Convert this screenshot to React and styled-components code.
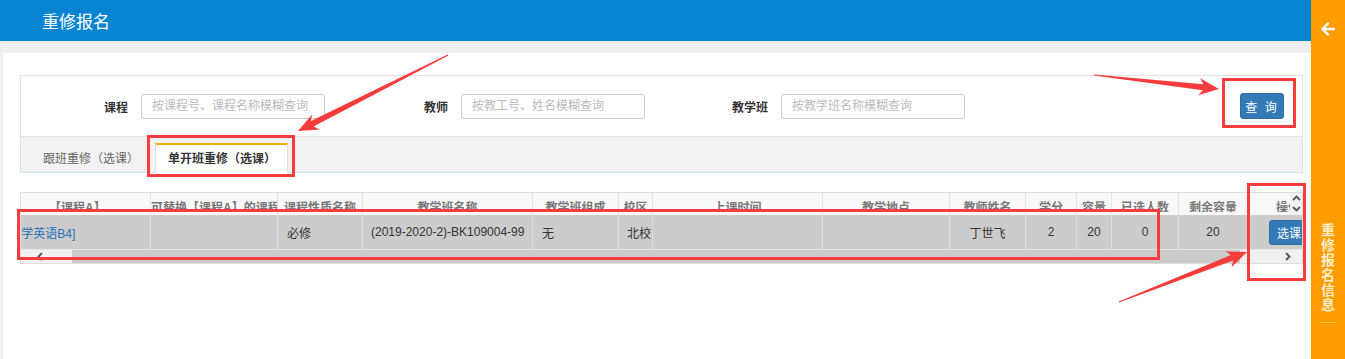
import React from "react";
import styled, { createGlobalStyle } from "styled-components";
import { FaArrowLeft } from "react-icons/fa";

const GlobalStyle = createGlobalStyle`
  html, body {
    margin: 0;
    padding: 0;
  }
  body {
    font-family: "Liberation Sans", "Noto Sans CJK SC", sans-serif;
    font-size: 12px;
    color: #333;
    overflow: hidden;
  }
`;

const Page = styled.div`
  position: relative;
  display: flex;
  width: 1345px;
  height: 359px;
  overflow: hidden;
`;

const Main = styled.div`
  width: 1311px;
  flex-shrink: 0;
  display: flex;
  flex-direction: column;
  background: #efefef;
`;

const TopBar = styled.div`
  height: 41px;
  flex-shrink: 0;
  display: flex;
  align-items: center;
  padding-left: 42px;
  background: #0784d1;
  color: #fff;
  font-size: 17px;
`;

const Content = styled.div`
  flex: 1;
  margin: 12px 0 0 3px;
  padding: 22px 8px 0 17px;
  background: #fff;
`;

const SearchPanel = styled.div`
  height: 60px;
  border: 1px solid #e3e3e3;
  display: flex;
  align-items: center;
  padding-left: 47px;
  gap: 63px;
`;

const Field = styled.div`
  display: flex;
  align-items: center;
  gap: 13px;
`;

const Label = styled.span`
  width: 60px;
  text-align: right;
  font-weight: bold;
  color: #333;
`;

const Input = styled.input`
  width: 184px;
  height: 25px;
  box-sizing: border-box;
  padding: 0 10px;
  border: 1px solid #cccccc;
  border-radius: 3px;
  font-family: inherit;
  font-size: 12px;
  outline: none;

  &::placeholder {
    color: #bbbbbb;
  }
`;

const QueryButton = styled.button`
  margin-left: auto;
  margin-right: 18px;
  width: 44px;
  height: 26px;
  padding: 0;
  border: 1px solid #2e6da4;
  border-radius: 3px;
  background: #337ab7;
  color: #fff;
  font-family: inherit;
  font-size: 12px;
  letter-spacing: 2px;
`;

const TabBar = styled.div`
  height: 35px;
  display: flex;
  align-items: flex-end;
  background: #f2f2f2;
  border: 1px solid #c9e7f1;
  border-top: none;
`;

const Tab = styled.div`
  height: 28px;
  line-height: 28px;
  margin-bottom: -1px;
  border-top: 2px solid ${(p) => (p.$active ? "#f0ad0e" : "transparent")};
  border-left: 1px solid ${(p) => (p.$active ? "#e0e0e0" : "transparent")};
  border-right: 1px solid ${(p) => (p.$active ? "#e0e0e0" : "transparent")};
  background: ${(p) => (p.$active ? "#fff" : "transparent")};
  padding: ${(p) => (p.$active ? "0 11px 0 12px" : "0 15px 0 21px")};
  color: ${(p) => (p.$active ? "#333" : "#666")};
  font-weight: ${(p) => (p.$active ? "bold" : "normal")};
  white-space: nowrap;
`;

const Table = styled.div`
  margin-top: 19px;
  border: 1px solid #dddddd;
  overflow: hidden;
`;

const HeadRow = styled.div`
  display: flex;
  height: 22px;
  background: #f8f8f8;
`;

const HeadCells = styled.div`
  flex: 1;
  display: flex;
  overflow: hidden;
`;

const HeadCell = styled.div`
  flex: 0 0 ${(p) => p.$w}px;
  box-sizing: border-box;
  height: 22px;
  padding-left: ${(p) => p.$pad || 0}px;
  text-align: ${(p) => p.$align};
  border-right: 1px solid #e2e2e2;
  color: #777;
  font-weight: bold;
  white-space: nowrap;
  overflow: hidden;
`;

const HeadLabel = styled.div`
  box-sizing: border-box;
  height: 19px;
  padding-top: 6px;
  line-height: 18px;
  overflow: hidden;
`;

const VScroll = styled.div`
  width: 12px;
  flex-shrink: 0;
  background: #f1f1f1;
  display: flex;
  flex-direction: column;
  align-items: center;
  padding-top: 2px;
  gap: 5px;
`;

const DataRow = styled.div`
  display: flex;
  height: 34px;
  background: #cccccc;
  border-bottom: 1px solid #e6e6e6;
  overflow: hidden;
`;

const DataCell = styled.div`
  flex: 0 0 ${(p) => p.$w}px;
  box-sizing: border-box;
  display: flex;
  align-items: center;
  justify-content: ${(p) => (p.$align === "center" ? "center" : "flex-start")};
  padding-left: ${(p) => p.$pad || 0}px;
  border-right: 1px solid #dfdfdf;
  color: #333;
  white-space: nowrap;
  overflow: hidden;
`;

const CourseLink = styled.a`
  margin-left: -15px;
  color: #2a6fb8;
  text-decoration: none;
  flex-shrink: 0;
`;

const SelectButton = styled.button`
  margin-left: 21px;
  flex-shrink: 0;
  height: 25px;
  padding: 0 9px 0 7px;
  border: 1px solid #2e6da4;
  border-radius: 3px;
  background: #337ab7;
  color: #fff;
  font-family: inherit;
  font-size: 12px;
`;

const HScroll = styled.div`
  display: flex;
  height: 13px;
  background: #f0f0f0;
`;

const ArrowBtn = styled.div`
  width: ${(p) => p.$w}px;
  margin-right: ${(p) => p.$mr || 0}px;
  flex-shrink: 0;
  display: flex;
  align-items: center;
  justify-content: center;
`;

const Thumb = styled.div`
  width: 1168px;
  margin-left: 13px;
  flex-shrink: 0;
  background: #cbcbcb;
`;

const Spacer = styled.div`
  flex: 1;
`;

const SideBar = styled.div`
  flex: 1;
  background: #ff9c00;
  display: flex;
  flex-direction: column;
  align-items: center;
  padding-top: 21px;
  color: #fff;
`;

const VerticalText = styled.div`
  margin-top: 186px;
  display: flex;
  flex-direction: column;
  align-items: center;
  font-size: 14px;
  line-height: 15px;
  font-weight: bold;
  color: #ffedc9;
`;

const SideLine = styled.div`
  width: 17px;
  height: 1px;
  margin-top: 9px;
  background: #ffc257;
`;

const Overlay = styled.svg`
  position: absolute;
  left: 0;
  top: 0;
  pointer-events: none;
`;

const columns = [
  { w: 130, head: "【课程A】", headAlign: "left", headPad: 28 },
  { w: 127, head: "可替换【课程A】的课程" },
  { w: 85, head: "课程性质名称" },
  { w: 170, head: "教学班名称" },
  { w: 86, head: "教学班组成" },
  { w: 34, head: "校区" },
  { w: 170, head: "上课时间" },
  { w: 127, head: "教学地点" },
  { w: 76, head: "教师姓名" },
  { w: 51, head: "学分" },
  { w: 35, head: "容量" },
  { w: 67, head: "已选人数" },
  { w: 69, head: "剩余容量" },
  { w: 90, head: "操作", headAlign: "left", headPad: 28 },
];

const rowCells = [
  { content: <CourseLink href="#">[大学英语B4]</CourseLink> },
  {},
  { content: "必修", pad: 9 },
  { content: "(2019-2020-2)-BK109004-99", pad: 8 },
  { content: "无", pad: 9 },
  { content: "北校区", pad: 8 },
  {},
  {},
  { content: "丁世飞", align: "center" },
  { content: "2", align: "center" },
  { content: "20", align: "center" },
  { content: "0", align: "center" },
  { content: "20", align: "center" },
  { content: <SelectButton>选课</SelectButton> },
];

const Chevron = ({ dir }) => {
  const paths = {
    left: "M5 1 L1.5 4.5 L5 8",
    right: "M1 1 L4.5 4.5 L1 8",
    up: "M1 5 L4.5 1.5 L8 5",
    down: "M1 1 L4.5 4.5 L8 1",
  };
  const horiz = dir === "left" || dir === "right";
  return (
    <svg width={horiz ? 6 : 9} height={horiz ? 9 : 6} viewBox={horiz ? "0 0 6 9" : "0 0 9 6"}>
      <path d={paths[dir]} fill="none" stroke="#555" strokeWidth="1.8" />
    </svg>
  );
};

function arrowPoints(x0, y0, x1, y1) {
  const dx = x1 - x0;
  const dy = y1 - y0;
  const len = Math.hypot(dx, dy);
  const ux = dx / len;
  const uy = dy / len;
  const nx = -uy;
  const ny = ux;
  const head = 20;
  const p = (along, side) =>
    `${(x0 + ux * along + nx * side).toFixed(1)},${(y0 + uy * along + ny * side).toFixed(1)}`;
  return [
    p(0, 0.6),
    p(len - head + 4, 3),
    p(len - head, 8.5),
    p(len, 0),
    p(len - head, -8.5),
    p(len - head + 4, -3),
    p(0, -0.6),
  ].join(" ");
}

const boxes = [
  { x: 148.5, y: 136.5, w: 145, h: 39 },
  { x: 1223.5, y: 79.5, w: 71, h: 47 },
  { x: 18.5, y: 210.5, w: 1140, h: 48 },
  { x: 1248.5, y: 184.5, w: 56, h: 95 },
];

const arrows = [
  [448, 55, 298, 131],
  [1094, 75, 1219, 89],
  [1119, 302, 1247, 252],
];

const Annotations = () => (
  <Overlay width="1345" height="359" viewBox="0 0 1345 359">
    {boxes.map((b, i) => (
      <rect key={i} x={b.x} y={b.y} width={b.w} height={b.h} fill="none" stroke="#f63c3c" strokeWidth="3" />
    ))}
    {arrows.map((a, i) => (
      <polygon key={i} points={arrowPoints(...a)} fill="#f63c3c" />
    ))}
  </Overlay>
);

const App = () => {
  return (
    <>
      <GlobalStyle />
      <Page>
        <Main>
          <TopBar>重修报名</TopBar>
          <Content>
            <SearchPanel>
              <Field>
                <Label>课程</Label>
                <Input placeholder="按课程号、课程名称模糊查询" />
              </Field>
              <Field>
                <Label>教师</Label>
                <Input placeholder="按教工号、姓名模糊查询" />
              </Field>
              <Field>
                <Label>教学班</Label>
                <Input placeholder="按教学班名称模糊查询" />
              </Field>
              <QueryButton>查 询</QueryButton>
            </SearchPanel>
            <TabBar>
              <Tab>跟班重修（选课）</Tab>
              <Tab $active>单开班重修（选课）</Tab>
            </TabBar>
            <Table>
              <HeadRow>
                <HeadCells>
                  {columns.map((c) => (
                    <HeadCell key={c.head} $w={c.w} $align={c.headAlign || "center"} $pad={c.headPad}>
                      <HeadLabel>{c.head}</HeadLabel>
                    </HeadCell>
                  ))}
                </HeadCells>
                <VScroll>
                  <Chevron dir="up" />
                  <Chevron dir="down" />
                </VScroll>
              </HeadRow>
              <DataRow>
                {rowCells.map((cell, i) => (
                  <DataCell key={i} $w={columns[i].w} $align={cell.align} $pad={cell.pad}>
                    {cell.content}
                  </DataCell>
                ))}
              </DataRow>
              <HScroll>
                <ArrowBtn $w={38}>
                  <Chevron dir="left" />
                </ArrowBtn>
                <Thumb />
                <Spacer />
                <ArrowBtn $w={17} $mr={6}>
                  <Chevron dir="right" />
                </ArrowBtn>
              </HScroll>
            </Table>
          </Content>
        </Main>
        <SideBar>
          <FaArrowLeft size={16} />
          <VerticalText>
            {"重修报名信息".split("").map((ch, i) => (
              <span key={i}>{ch}</span>
            ))}
          </VerticalText>
          <SideLine />
        </SideBar>
        <Annotations />
      </Page>
    </>
  );
};

export default App;
